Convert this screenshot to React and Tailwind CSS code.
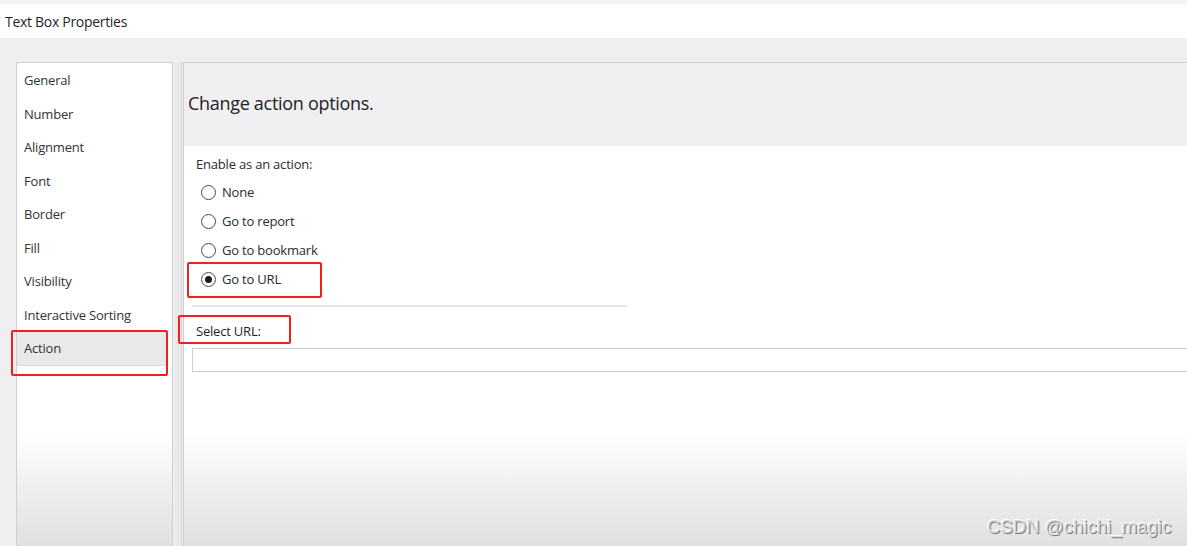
import React from "react";

const font = { fontFamily: '"Open Sans", "Noto Sans", sans-serif' };

function Radio({ label, checked }) {
  return (
    <div className="flex items-center h-[29px] pl-[9px]">
      <span className="w-[15px] h-[15px] rounded-full border border-[#4a4a4a] bg-white flex items-center justify-center">
        {checked && <span className="w-[7px] h-[7px] rounded-full bg-[#1c1c1c]" />}
      </span>
      <span className="ml-[6px] text-[13px] text-[#2b2b2b] tracking-[-0.2px]">{label}</span>
    </div>
  );
}

export default function App() {
  const items = ["General", "Number", "Alignment", "Font", "Border", "Fill", "Visibility", "Interactive Sorting", "Action"];
  return (
    <div style={font} className="w-[1187px] h-[546px] overflow-hidden bg-[#efeef0] flex flex-col relative">
      <div className="h-[4px] bg-[#f3f3f4]" />
      <div className="h-[34px] bg-white flex items-center pl-[5px] text-[14px] text-[#1f1f1f] tracking-[-0.3px]">Text Box Properties</div>
      <div className="flex-1 flex pt-[24px] pl-[16px]">
        <div className="w-[157px] border border-[#cfcfcf] border-b-0 bg-[linear-gradient(to_bottom,#ffffff_0%,#ffffff_77%,#f3f3f3_85%,#e0e0e0_100%)] flex flex-col pt-[1px]">
          {items.map((it) => (
            <div
              key={it}
              className={`h-[33.5px] flex items-center pl-[7px] text-[13px] text-[#333] tracking-[-0.2px] ${it === "Action" ? "bg-[#e9e9e9] mr-[4px] border-b border-[#dadada]" : ""}`}
            >
              {it}
            </div>
          ))}
        </div>
        <div className="w-[8px] ml-[1px] border-r border-[#d6d6d6] bg-[#ebebeb]" />
        <div className="flex-1 border-l border-t border-[#cfcfcf] ml-[1px] flex flex-col">
          <div className="h-[83px] bg-[#f0eff1] flex items-center pl-[4px] pb-[3px] text-[18px] text-[#222] tracking-[-0.3px]">Change action options.</div>
          <div className="flex-1 bg-[linear-gradient(to_bottom,#ffffff_0%,#ffffff_72%,#f3f3f3_82%,#e0e0e0_100%)] pl-[8px] pt-[9px]">
            <div className="pl-[4px] text-[13px] text-[#2b2b2b] h-[20px] flex items-center tracking-[-0.2px]">Enable as an action:</div>
            <div className="mt-[3px]">
              <Radio label="None" />
              <Radio label="Go to report" />
              <Radio label="Go to bookmark" />
              <Radio label="Go to URL" checked />
            </div>
            <div className="mt-[11px] w-[435px] h-[2px] bg-[#e6e6e6]" />
            <div className="mt-[16px] pl-[4px] text-[13px] text-[#1f1f1f] h-[18px] flex items-center tracking-[-0.2px]">Select URL:</div>
            <div className="mt-[7px] h-[24px] border border-[#cdcdcd] border-r-0 bg-white" />
          </div>
        </div>
      </div>

      {/* red annotation boxes */}
      <div className="absolute left-[11px] top-[330px] w-[157px] h-[46px] border-2 border-[#f41e1e] rounded-[2px]" />
      <div className="absolute left-[187px] top-[262px] w-[135px] h-[36px] border-2 border-[#f41e1e] rounded-[2px]" />
      <div className="absolute left-[178px] top-[315px] w-[113px] h-[29px] border-2 border-[#f41e1e] rounded-[2px]" />

      <div
        className="absolute left-[987px] top-[513px] text-[18.6px] text-[#d8d8d8] [text-shadow:1px_1px_0_#7a7a7a,-1px_-1px_0_#ffffff]"
        style={{ fontFamily: '"Liberation Sans", sans-serif' }}
      >
        CSDN @chichi_magic
      </div>
    </div>
  );
}
